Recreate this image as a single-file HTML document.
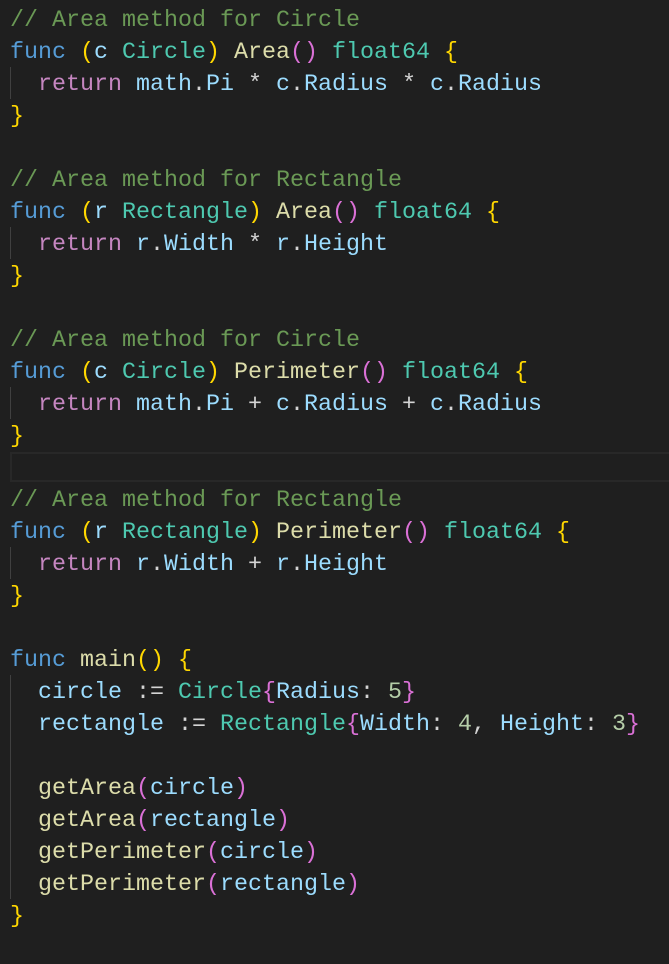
<!DOCTYPE html>
<html><head><style>
body{margin:0;background:#1f1f1f;width:669px;height:964px;overflow:hidden;position:relative}
pre{margin:0;position:absolute;left:10px;top:5px;font-family:"Liberation Mono",monospace;font-size:23.33px;line-height:32px;color:#d4d4d4}
.k{color:#569cd6}.r{color:#c586c0}.t{color:#4ec9b0}.f{color:#dcdcaa}.v{color:#9cdcfe}.c{color:#6a9955}.n{color:#b5cea8}.y{color:#ffd700}.p{color:#da70d6}
.g{position:absolute;left:10px;width:1px;background:#404040}
.cur{position:absolute;left:10px;top:452px;width:670px;height:30px;border:2px solid #282828;box-sizing:border-box}
</style></head><body>
<div class="cur"></div>
<div class="g" style="top:67px;height:32px"></div>
<div class="g" style="top:227px;height:32px"></div>
<div class="g" style="top:387px;height:32px"></div>
<div class="g" style="top:547px;height:32px"></div>
<div class="g" style="top:675px;height:224px"></div>
<pre><span class="c">// Area method for Circle</span>
<span class="k">func</span> <span class="y">(</span><span class="v">c</span> <span class="t">Circle</span><span class="y">)</span> <span class="f">Area</span><span class="p">()</span> <span class="t">float64</span> <span class="y">{</span>
  <span class="r">return</span> <span class="v">math</span>.<span class="v">Pi</span> * <span class="v">c</span>.<span class="v">Radius</span> * <span class="v">c</span>.<span class="v">Radius</span>
<span class="y">}</span>

<span class="c">// Area method for Rectangle</span>
<span class="k">func</span> <span class="y">(</span><span class="v">r</span> <span class="t">Rectangle</span><span class="y">)</span> <span class="f">Area</span><span class="p">()</span> <span class="t">float64</span> <span class="y">{</span>
  <span class="r">return</span> <span class="v">r</span>.<span class="v">Width</span> * <span class="v">r</span>.<span class="v">Height</span>
<span class="y">}</span>

<span class="c">// Area method for Circle</span>
<span class="k">func</span> <span class="y">(</span><span class="v">c</span> <span class="t">Circle</span><span class="y">)</span> <span class="f">Perimeter</span><span class="p">()</span> <span class="t">float64</span> <span class="y">{</span>
  <span class="r">return</span> <span class="v">math</span>.<span class="v">Pi</span> + <span class="v">c</span>.<span class="v">Radius</span> + <span class="v">c</span>.<span class="v">Radius</span>
<span class="y">}</span>

<span class="c">// Area method for Rectangle</span>
<span class="k">func</span> <span class="y">(</span><span class="v">r</span> <span class="t">Rectangle</span><span class="y">)</span> <span class="f">Perimeter</span><span class="p">()</span> <span class="t">float64</span> <span class="y">{</span>
  <span class="r">return</span> <span class="v">r</span>.<span class="v">Width</span> + <span class="v">r</span>.<span class="v">Height</span>
<span class="y">}</span>

<span class="k">func</span> <span class="f">main</span><span class="y">()</span> <span class="y">{</span>
  <span class="v">circle</span> := <span class="t">Circle</span><span class="p">{</span><span class="v">Radius</span>: <span class="n">5</span><span class="p">}</span>
  <span class="v">rectangle</span> := <span class="t">Rectangle</span><span class="p">{</span><span class="v">Width</span>: <span class="n">4</span>, <span class="v">Height</span>: <span class="n">3</span><span class="p">}</span>

  <span class="f">getArea</span><span class="p">(</span><span class="v">circle</span><span class="p">)</span>
  <span class="f">getArea</span><span class="p">(</span><span class="v">rectangle</span><span class="p">)</span>
  <span class="f">getPerimeter</span><span class="p">(</span><span class="v">circle</span><span class="p">)</span>
  <span class="f">getPerimeter</span><span class="p">(</span><span class="v">rectangle</span><span class="p">)</span>
<span class="y">}</span></pre>
</body></html>
